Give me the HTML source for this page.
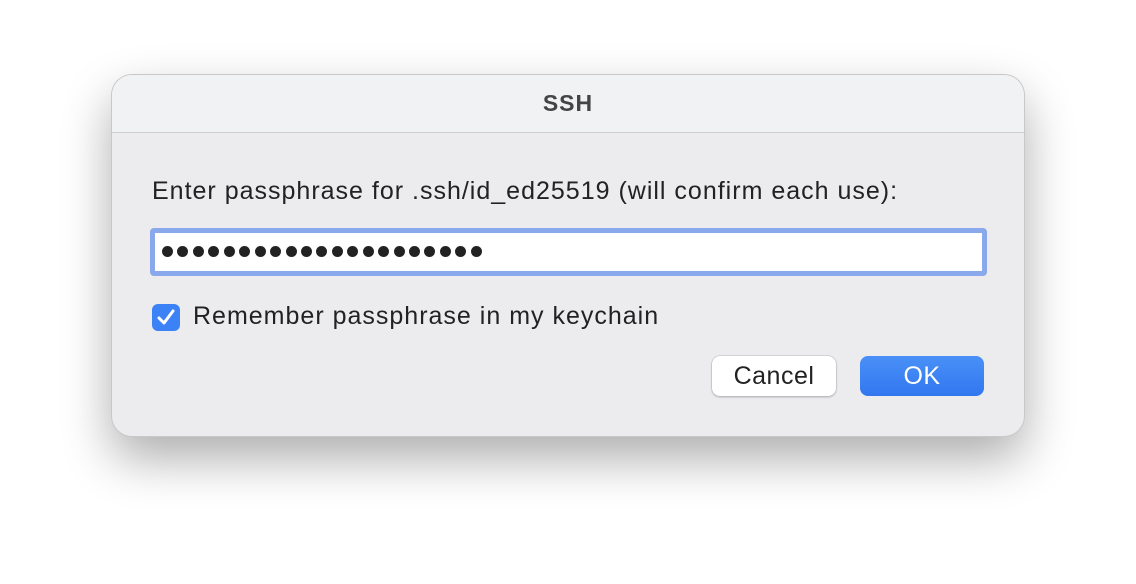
<!DOCTYPE html>
<html><head><style>
body{margin:0;width:1136px;height:584px;background:#fff;font-family:"Liberation Sans",sans-serif;position:relative;overflow:hidden}
.dlg{position:absolute;left:112px;top:75px;width:912px;height:361px;border-radius:20px;background:#ececee;box-shadow:0 0 0 1px #c8c8c8,0 22px 50px rgba(0,0,0,.33);overflow:hidden}
.title{height:57px;background:#f1f2f4;border-bottom:1px solid #cfcfcf;text-align:center;line-height:56px;font-weight:bold;font-size:23px;letter-spacing:1px;color:#444}
.abs{position:absolute}
.lbl{left:40px;top:102px;font-size:25px;letter-spacing:1px;color:#222}
.inp{left:38px;top:153px;width:827px;height:38px;background:#fff;border:5px solid #8aa8ec;border-radius:4px}
.dots{position:absolute;left:7px;top:13px;display:flex;gap:4.45px}
.dots i{width:11px;height:11px;border-radius:50%;background:#222;display:block}
.cb{left:40px;top:229px;width:28px;height:27px;border-radius:6px;background:#3b82f6}
.cbl{left:81px;top:227px;font-size:25px;letter-spacing:1px;color:#222}
.btn{top:281px;width:124px;height:40px;border-radius:8px;font-size:25px;letter-spacing:.5px;text-align:center;line-height:40px}
.cancel{left:600px;background:#fff;color:#222;box-shadow:0 0 0 .5px #bbb,0 1px 2px rgba(0,0,0,.3)}
.ok{left:748px;background:linear-gradient(#4a90f7,#3277f0);color:#fff}
</style></head><body>
<div class="dlg">
<div class="title">SSH</div>
<div class="abs lbl">Enter passphrase for .ssh/id_ed25519 (will confirm each use):</div>
<div class="abs inp"><div class="dots"><i></i><i></i><i></i><i></i><i></i><i></i><i></i><i></i><i></i><i></i><i></i><i></i><i></i><i></i><i></i><i></i><i></i><i></i><i></i><i></i><i></i></div></div>
<div class="abs cb"><svg width="28" height="27" viewBox="0 0 28 27"><path d="M7 14 L12 19 L21 7" fill="none" stroke="#fff" stroke-width="3" stroke-linecap="round" stroke-linejoin="round"/></svg></div>
<div class="abs cbl">Remember passphrase in my keychain</div>
<div class="abs btn cancel">Cancel</div>
<div class="abs btn ok">OK</div>
</div>
</body></html>
